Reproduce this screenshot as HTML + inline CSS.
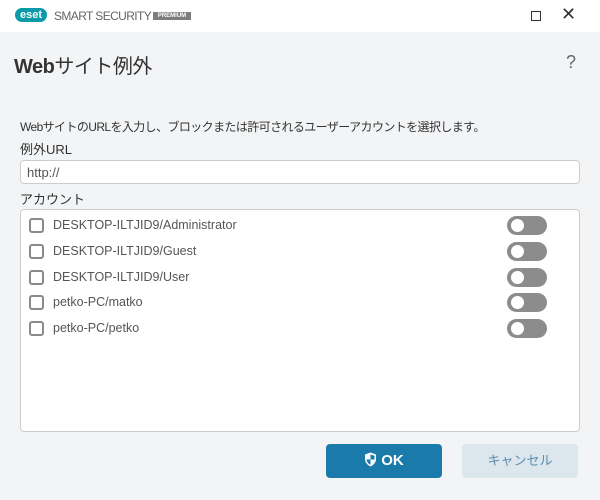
<!DOCTYPE html><html><head><meta charset="utf-8"><style>
*{box-sizing:border-box;margin:0;padding:0}
body{width:600px;height:500px;background:#f3f4f6;font-family:"Liberation Sans","Noto Sans CJK JP",sans-serif;position:relative;overflow:hidden;color:#333}
.tb{position:absolute;left:0;top:0;width:600px;height:32px;background:#fff}
.a{position:absolute;white-space:nowrap}
.row{position:absolute;left:29px;height:20px}
.cb{position:absolute;left:0;top:2px;width:15px;height:15px;border:2px solid #8a8a8a;border-radius:3px;background:#fff}
.lb{position:absolute;left:24px;top:2px;font-size:12.5px;color:#555;white-space:nowrap}
.tg{position:absolute;left:478px;top:0;width:40px;height:19px;border-radius:10px;background:#8c8c8c}
.tg:after{content:"";position:absolute;left:4px;top:3px;width:13px;height:13px;border-radius:50%;background:#fff}
</style></head><body>
<div class="tb">
<div class="a" style="left:15px;top:8px;width:32px;height:14px;border-radius:7px;background:#0b9aa8;color:#fff;font-size:11px;font-weight:bold;line-height:14px;text-align:center">eset</div>
<div class="a" style="left:54px;top:9px;font-size:12px;color:#666;letter-spacing:-0.6px">SMART SECURITY</div>
<div class="a" style="left:153px;top:12px;width:38px;height:8px;background:#7d7d7d;color:#fff;font-size:6px;line-height:8px;text-align:center;font-weight:bold">PREMIUM</div>
<div class="a" style="left:531px;top:11px;width:10px;height:10px;border:1.5px solid #333"></div>
<div class="a" style="left:561px;top:4px;font-size:18px;color:#333">✕</div>
</div>
<div class="a" style="left:14px;top:50px;font-size:20px;color:#333;letter-spacing:-0.5px"><b style="font-weight:bold">Web</b>サイト例外</div>
<div class="a" style="left:566px;top:52px;font-size:18px;color:#666">?</div>
<div class="a" style="left:20px;top:118px;font-size:12px;color:#333;letter-spacing:-0.6px">WebサイトのURLを入力し、ブロックまたは許可されるユーザーアカウントを選択します。</div>
<div class="a" style="left:20px;top:139px;font-size:13px;color:#333">例外URL</div>
<div class="a" style="left:20px;top:160px;width:560px;height:24px;background:#fff;border:1px solid #ccc;border-radius:4px;font-size:13px;color:#555;padding:4px 0 0 6px">http://</div>
<div class="a" style="left:20px;top:189px;font-size:13px;color:#333">アカウント</div>
<div class="a" style="left:20px;top:209px;width:560px;height:223px;background:#fff;border:1px solid #ccc;border-radius:4px"></div>
<div class="row" style="top:216px"><div class="cb"></div><div class="lb">DESKTOP-ILTJID9/Administrator</div><div class="tg"></div></div>
<div class="row" style="top:242px"><div class="cb"></div><div class="lb">DESKTOP-ILTJID9/Guest</div><div class="tg"></div></div>
<div class="row" style="top:268px"><div class="cb"></div><div class="lb">DESKTOP-ILTJID9/User</div><div class="tg"></div></div>
<div class="row" style="top:293px"><div class="cb"></div><div class="lb">petko-PC/matko</div><div class="tg"></div></div>
<div class="row" style="top:319px"><div class="cb"></div><div class="lb">petko-PC/petko</div><div class="tg"></div></div>
<div class="a" style="left:326px;top:444px;width:116px;height:34px;background:#1a7bab;border-radius:4px;color:#fff;font-size:15px;font-weight:bold;line-height:34px;text-align:center">
<svg width="13" height="15" viewBox="0 0 13 15" style="vertical-align:-2px;margin-right:4px"><path d="M6.5 0.5L12 2.5V7c0 3.5-2.5 6-5.5 7.5C3.5 13 1 10.5 1 7V2.5z" fill="#fff"/><path d="M6.5 2.5V7.5H2.5C2.8 10 4.3 11.8 6.5 12.8V7.5H10.5V3.8z" fill="#1a7bab"/></svg>OK</div>
<div class="a" style="left:462px;top:444px;width:116px;height:34px;background:#dce6ed;border-radius:4px;color:#5a8db0;font-size:13px;line-height:34px;text-align:center">キャンセル</div>
</body></html>
